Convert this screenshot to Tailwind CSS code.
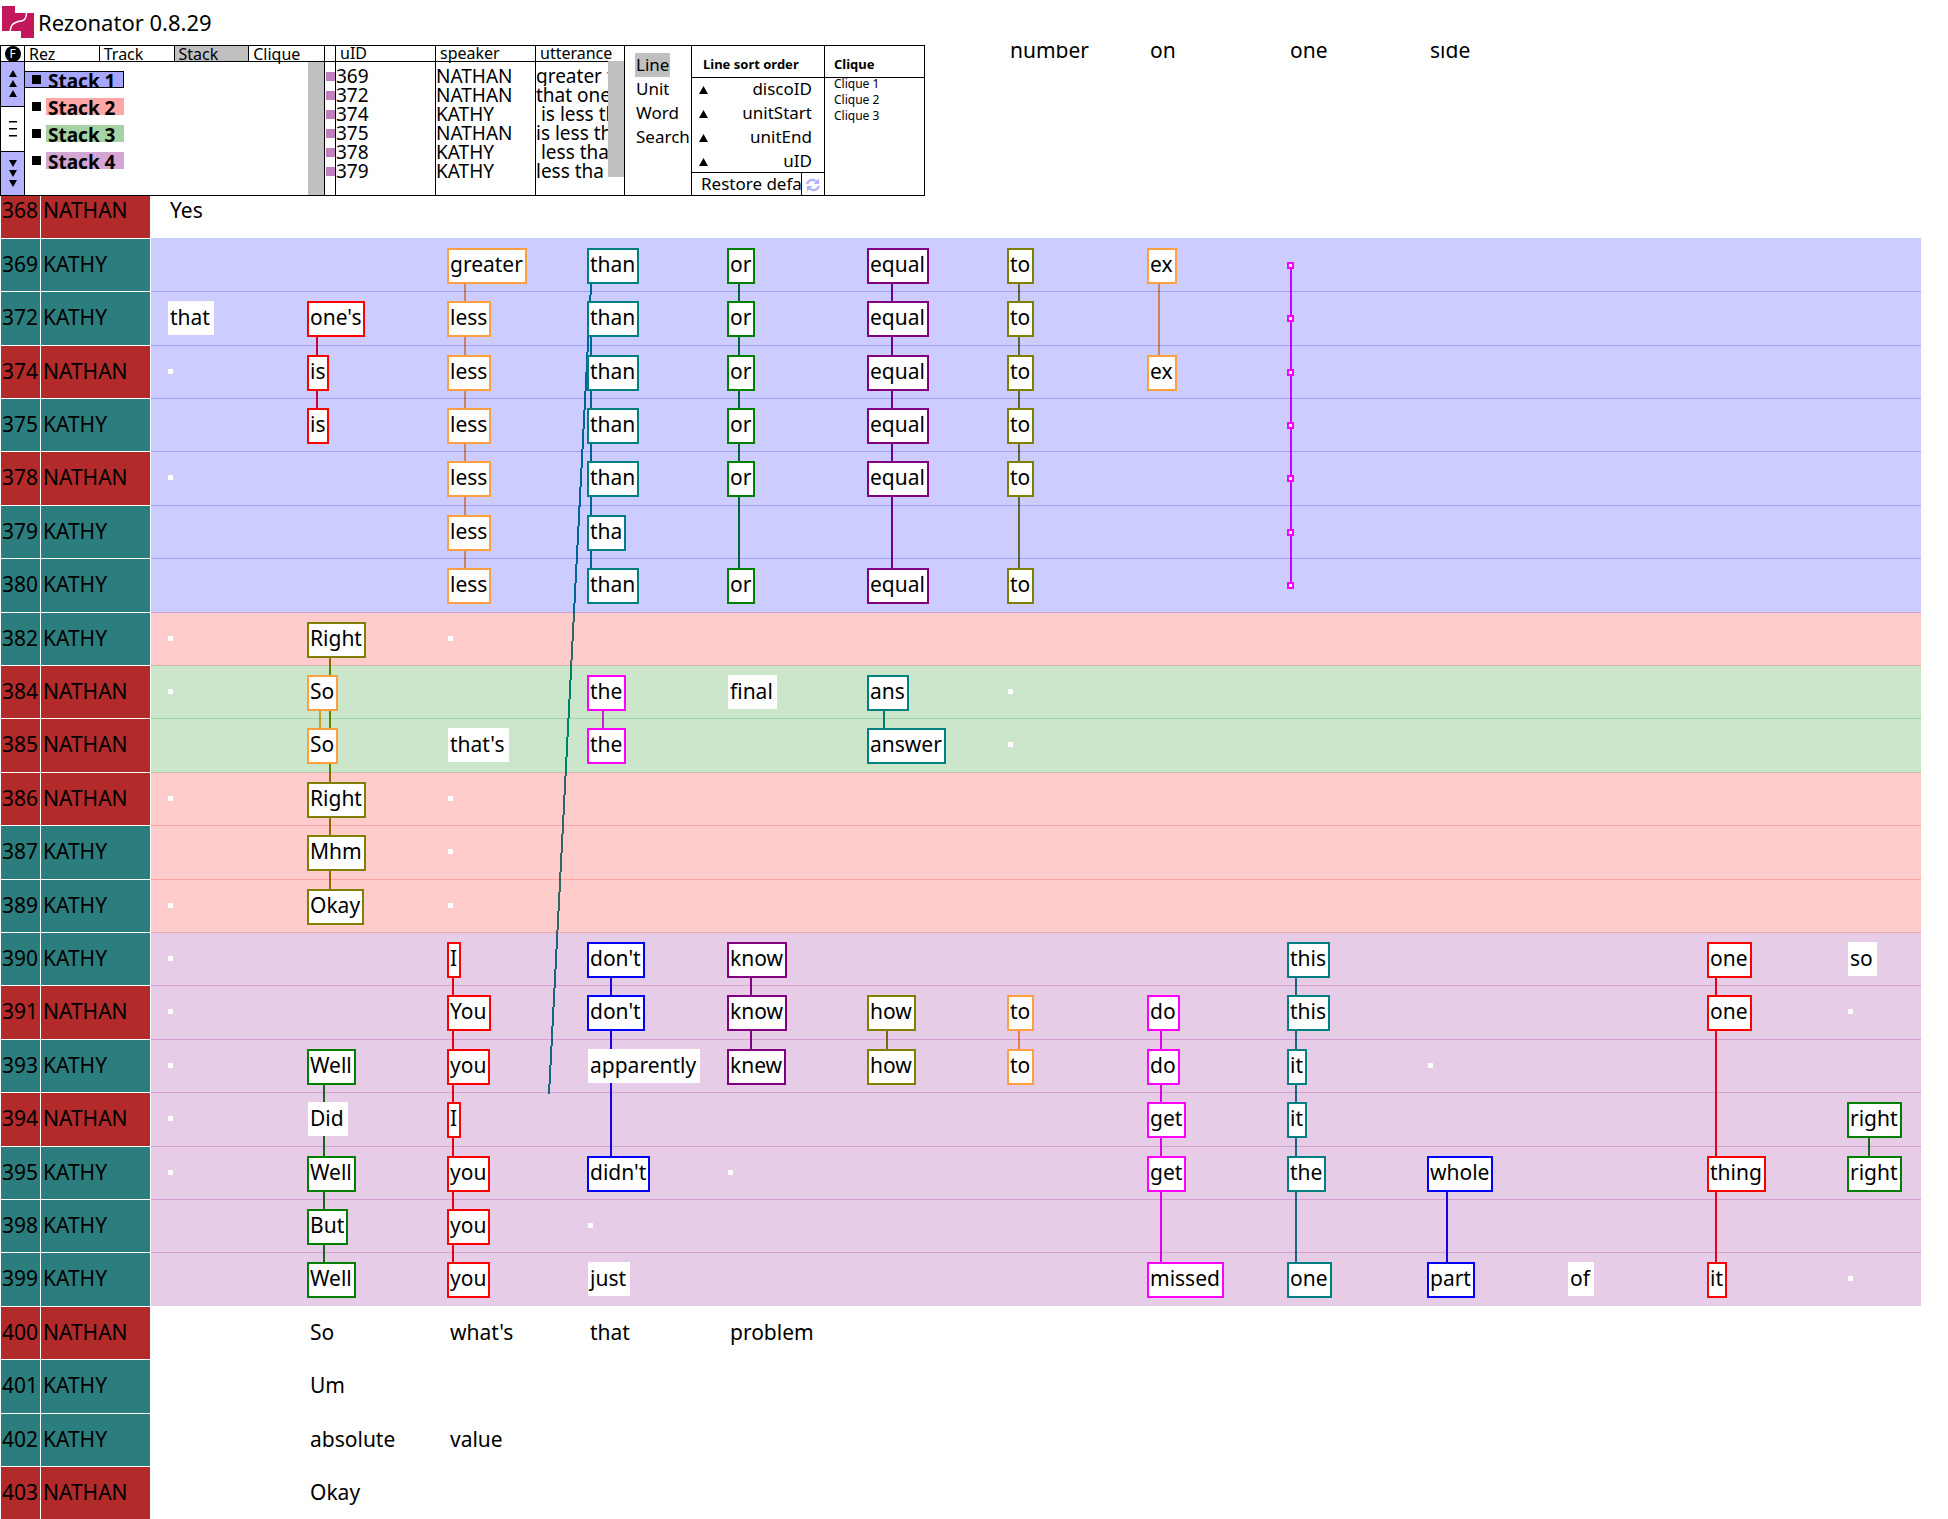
<!DOCTYPE html>
<html lang="en">
<head>
<meta charset="utf-8">
<title>Rezonator 0.8.29</title>
<script src="https://cdn.jsdelivr.net/npm/@tailwindcss/browser@4"></script>
</head>
<body class="bg-white text-black font-['Noto_Sans','Open_Sans',sans-serif] overflow-x-hidden">

<!-- Title bar -->
<header class="flex h-[45px] items-center gap-1 pb-px pl-0.5">
  <svg class="size-8" viewBox="0 0 32 32" aria-hidden="true">
    <path fill="#c2185b" d="M0 0H13V7H32V32H19V25H0Z"/>
    <path fill="none" stroke="#fff" stroke-width="1.500" d="M24.500 7C24 17 18 14.500 15 16C9 18 9.500 20 8 25"/>
  </svg>
  <h1 class="text-[22px] leading-8">Rezonator 0.8.29</h1>
</header>

<!-- Panels -->
<section class="flex h-[151px]">
  <div class="flex w-[925px] shrink-0 border-y border-r border-black">

    <!-- Scroll strip -->
    <nav class="flex w-[25px] shrink-0 flex-col border-x border-black" aria-label="Scroll">
      <button class="flex h-4 items-center justify-center border-b border-black">
        <span class="z-10 size-4 rounded-full bg-black text-[12px] leading-4 text-white">F</span>
      </button>
      <button class="flex h-[45px] items-center justify-center border-b border-black bg-[#b3b3ff]" aria-label="Up">
        <svg class="h-7 w-2" viewBox="0 0 8 28"><path d="M4 0 8 7H0ZM4 10 8 17H0ZM4 20 8 27H0Z"/></svg>
      </button>
      <button class="flex h-[45px] items-center justify-center border-b border-black" aria-label="Menu">
        <svg class="h-4 w-2" viewBox="0 0 8 16"><path d="M0 0H8V1.500H0ZM0 7H8V8.500H0ZM0 14H8V15.500H0Z"/></svg>
      </button>
      <button class="flex grow items-center justify-center bg-[#b3b3ff]" aria-label="Down">
        <svg class="h-7 w-2" viewBox="0 0 8 28"><path d="M0 0H8L4 7ZM0 10H8L4 17ZM0 20H8L4 27Z"/></svg>
      </button>
    </nav>

    <!-- Stack list -->
    <div class="flex w-[299px] shrink-0 flex-col">
      <div class="grid h-4 grid-cols-4 border-b border-black text-left text-base leading-[14px]">
        <button class="border-r border-black pl-1 text-left">Rez</button>
        <button class="border-r border-black pl-1 text-left">Track</button>
        <button class="border-r border-black bg-[#c0c0c0] pl-1 text-left">Stack</button>
        <button class="pl-1 text-left">Clique</button>
      </div>
      <div class="flex grow">
        <ul class="flex grow flex-col gap-2.5 pt-[9px] text-[19px] font-bold leading-5">
          <li class="flex h-[17px] w-[99px] items-center gap-[5px] overflow-hidden border border-l-0 border-black bg-[#a6a6ff] pl-[7px]"><span class="size-[9px] bg-black"></span><span class="h-[15px] pl-0.5 leading-[18px]">Stack 1</span></li>
          <li class="flex h-[17px] w-[99px] items-center gap-[5px] pl-[7px]"><span class="size-[9px] bg-black"></span><span class="h-[17px] grow overflow-hidden bg-[#ffa6a6] pl-0.5">Stack 2</span></li>
          <li class="flex h-[17px] w-[99px] items-center gap-[5px] pl-[7px]"><span class="size-[9px] bg-black"></span><span class="h-[17px] grow overflow-hidden bg-[#a6d3a6] pl-0.5">Stack 3</span></li>
          <li class="flex h-[17px] w-[99px] items-center gap-[5px] pl-[7px]"><span class="size-[9px] bg-black"></span><span class="h-[17px] grow overflow-hidden bg-[#d3a6d3] pl-0.5">Stack 4</span></li>
        </ul>
        <div class="w-4 bg-[#c0c0c0]"></div>
      </div>
    </div>

    <!-- Units of the selected stack -->
    <div class="relative w-[301px] shrink-0 border-x border-black">
      <table class="h-full w-full table-fixed border-separate border-spacing-0 whitespace-pre text-left text-[19px] leading-[19px]">
        <colgroup><col class="w-[11px]"><col class="w-[100px]"><col class="w-[100px]"><col></colgroup>
        <thead class="text-base leading-[15px]">
          <tr>
            <th class="h-4 border-b border-r border-black p-0"></th>
            <th class="h-4 border-b border-r border-black p-0 pl-1 font-normal">uID</th>
            <th class="h-4 border-b border-r border-black p-0 pl-1 font-normal">speaker</th>
            <th class="h-4 border-b border-black p-0 pl-1 font-normal">utterance</th>
          </tr>
        </thead>
        <tbody id="units"></tbody>
      </table>
      <div class="absolute right-0 top-[15px] h-[116px] w-4 bg-[#c0c0c0]"></div>
    </div>

    <!-- View -->
    <div class="flex w-[66px] shrink-0 flex-col items-start pl-[11px] pt-[7px] text-[17px] leading-6">
      <button class="-ml-px bg-[#c0c0c0] px-px">Line</button>
      <button>Unit</button>
      <button>Word</button>
      <button>Search</button>
    </div>

    <!-- Sort order -->
    <div class="flex w-[134px] shrink-0 flex-col border-x border-black">
      <h2 class="h-8 border-b border-black pl-[11px] pt-1 text-[13px] font-bold leading-7">Line sort order</h2>
      <ul class="grow text-[17px] leading-[22px]">
        <li class="flex h-6 items-start justify-between pl-[7px] pr-3"><svg class="mt-2 h-2 w-[9px]" viewBox="0 0 9 8"><path d="M4.500 0 9 8H0Z"/></svg>discoID</li>
        <li class="flex h-6 items-start justify-between pl-[7px] pr-3"><svg class="mt-2 h-2 w-[9px]" viewBox="0 0 9 8"><path d="M4.500 0 9 8H0Z"/></svg>unitStart</li>
        <li class="flex h-6 items-start justify-between pl-[7px] pr-3"><svg class="mt-2 h-2 w-[9px]" viewBox="0 0 9 8"><path d="M4.500 0 9 8H0Z"/></svg>unitEnd</li>
        <li class="flex h-[22px] items-start justify-between pl-[7px] pr-3"><svg class="mt-2 h-2 w-[9px]" viewBox="0 0 9 8"><path d="M4.500 0 9 8H0Z"/></svg>uID</li>
      </ul>
      <div class="flex h-6 shrink-0 border-t border-black">
        <button class="w-[110px] overflow-hidden whitespace-nowrap border-r border-black pb-0.5 pl-[9px] text-left text-[17px] leading-5">Restore default</button>
        <button class="flex grow items-center justify-center" aria-label="Refresh">
          <svg class="size-[14px]" viewBox="0 0 14 14" fill="#b3b3ff"><path d="M0 6C1 1 7-1 11 2.500L13 .5V6H7.500L9.500 4C7 2 3.500 3 2.500 6ZM14 8C13 13 7 15 3 11.500L1 13.500V8H6.500L4.500 10C7 12 10.500 11 11.500 8Z"/></svg>
        </button>
      </div>
    </div>

    <!-- Cliques -->
    <div class="grow">
      <h2 class="h-8 border-b border-black pl-[9px] pt-1 text-[13px] font-bold leading-7">Clique</h2>
      <ul class="-mt-0.5 pl-[9px] text-[12px] leading-4">
        <li>Clique 1</li>
        <li>Clique 2</li>
        <li>Clique 3</li>
      </ul>
    </div>
  </div>

  <!-- Line scrolled partly out of view -->
  <div class="h-8 grow overflow-hidden pl-[85px]">
    <div class="-mt-[11px] grid grid-cols-[140px_140px_140px_140px] pt-0.5 text-[21px] leading-[28px]">
      <span>number</span><span>on</span><span>one</span><span>side</span>
    </div>
  </div>
</section>

<!-- Transcript -->
<main class="relative pr-[27px]">
  <svg id="links" class="absolute inset-0 h-full w-full" fill="none" stroke-width="2" shape-rendering="crispEdges" aria-hidden="true"></svg>
  <table class="relative w-full table-fixed border-separate border-spacing-0 text-left text-[21px] leading-[28px]">
    <colgroup id="cols"><col class="w-[41px]"><col class="w-[110px]"></colgroup>
    <tbody id="lines"></tbody>
  </table>
</main>

<script>
const units = [
  ['369', 'NATHAN', 'greater than'], ['372', 'NATHAN', "that one's"], ['374', 'KATHY', ' is less than'],
  ['375', 'NATHAN', 'is less than'], ['378', 'KATHY', ' less than'], ['379', 'KATHY', 'less tha'],
];
const body = document.getElementById('units');
body.innerHTML = units.map(([id, who, text]) => `<tr>
  <td class="h-[19px] border-r border-black p-0"><div class="ml-px size-[9px] bg-[#c080c0]"></div></td>
  <td class="h-[19px] border-r border-black p-0">${id}</td>
  <td class="h-[19px] border-r border-black p-0">${who}</td>
  <td class="h-[19px] overflow-hidden p-0">${text}</td></tr>`).join('');
// spacer rows let the column rules run the full height of the panel
const spacer = h => `<tr><td class="${h} border-r border-black p-0"></td><td class="${h} border-r border-black p-0"></td><td class="${h} border-r border-black p-0"></td><td class="${h} p-0"></td></tr>`;
body.insertAdjacentHTML('afterbegin', spacer('h-[5px]'));
body.insertAdjacentHTML('beforeend', spacer('h-[14px]'));

// [uID, speaker, stack, one entry per column]; an entry is "chain:word", "." for a pause
const lines = [
  ['368', 'NATHAN', 0, '-:Yes'],
  ['369', 'KATHY', 1, '||o:greater|t:than|g:or|p:equal|l:to|o:ex|#'],
  ['372', 'KATHY', 1, "w:that|r:one's|o:less|t:than|g:or|p:equal|l:to||#"],
  ['374', 'NATHAN', 1, '.|r:is|o:less|t:than|g:or|p:equal|l:to|o:ex|#'],
  ['375', 'KATHY', 1, '|r:is|o:less|t:than|g:or|p:equal|l:to||#'],
  ['378', 'NATHAN', 1, '.||o:less|t:than|g:or|p:equal|l:to||#'],
  ['379', 'KATHY', 1, '||o:less|t:tha|||||#'],
  ['380', 'KATHY', 1, '||o:less|t:than|g:or|p:equal|l:to||#'],
  ['382', 'KATHY', 2, '.|l:Right|.'],
  ['384', 'NATHAN', 3, '.|o:So||m:the|w:final|t:ans|.'],
  ['385', 'NATHAN', 3, "|o:So|w:that's|m:the||t:answer|."],
  ['386', 'NATHAN', 2, '.|l:Right|.'],
  ['387', 'KATHY', 2, '|l:Mhm|.'],
  ['389', 'KATHY', 2, '.|l:Okay|.'],
  ['390', 'KATHY', 4, ".||r:I|b:don't|p:know||||t:this|||r:one|w:so"],
  ['391', 'NATHAN', 4, ".||r:You|b:don't|p:know|l:how|o:to|m:do|t:this|||r:one|."],
  ['393', 'KATHY', 4, '.|g:Well|r:you|w:apparently|p:knew|l:how|o:to|m:do|t:it|.'],
  ['394', 'NATHAN', 4, '.|w:Did|r:I|||||m:get|t:it||||g:right'],
  ['395', 'KATHY', 4, ".|g:Well|r:you|b:didn't|.|||m:get|t:the|b:whole||r:thing|g:right"],
  ['398', 'KATHY', 4, '|g:But|r:you|.'],
  ['399', 'KATHY', 4, '|g:Well|r:you|w:just||||m:missed|t:one|b:part|w:of|r:it|.'],
  ['400', 'NATHAN', 0, "|-:So|-:what's|-:that|-:problem"],
  ['401', 'KATHY', 0, '|-:Um'],
  ['402', 'KATHY', 0, '|-:absolute|-:value'],
  ['403', 'NATHAN', 0, '|-:Okay'],
];
const stackBg = ['', 'bg-[#0000ff]/20', 'bg-[#ff0000]/20', 'bg-[#008000]/20', 'bg-[#800080]/20'];
const stackRule = ['border-transparent', 'border-[#0000ff]/20', 'border-[#ff0000]/20', 'border-[#008000]/20', 'border-[#800080]/20'];
const chipBorder = {
  o: 'border-[#ffa040]', t: 'border-[#008080]', g: 'border-[#008000]', p: 'border-[#800080]',
  l: 'border-[#808000]', r: 'border-[#ff0000]', b: 'border-[#0000ff]', m: 'border-[#ff00ff]',
};
const heights = [53, 54, 53, 53, 54];
const rowClass = { 53: 'h-[53px]', 54: 'h-[54px]' };
const speakerBg = { NATHAN: 'bg-[#b22a2a]', KATHY: 'bg-[#2c7d7d]' };

function cell(entry) {
  if (!entry) return '';
  if (entry === '.') return '<div class="ml-px mt-[14px] size-[5px] bg-white"></div>';
  if (entry === '#') return '<div class="mt-[14px] size-[7px] border-2 border-[#ff00ff] bg-white"></div>';
  const [kind, word] = entry.split(':');
  if (kind === '-') return `<span class="ml-[3px]">${word}</span>`;
  if (kind === 'w') return `<div class="ml-px h-[34px] w-fit bg-white pl-0.5 pr-1 pt-0.5">${word}</div>`;
  return `<div class="h-9 w-fit border-2 bg-white pl-px pr-0.5 ${chipBorder[kind]}">${word}</div>`;
}

const mid = {};
let offset = 0, prev = 0, html = '';
lines.forEach(([id, who, stack, text], i) => {
  const first = i === 0;
  const h = first ? 42 : heights[(i - 1) % 5];
  const hc = first ? 'h-[42px]' : rowClass[h];
  const pad = first ? 'pt-0' : 'pt-[11px]';
  const wordPad = first || !stack ? pad : 'pt-[9px]';
  const topRule = first ? '' : 'border-t';
  const words = text.split('|');
  html += `<tr><th scope="row" class="${hc} ${pad} ${topRule} border-x border-white pb-0 pl-px pr-0 align-top font-normal ${speakerBg[who]}">${id}</th>`
    + `<td class="${hc} ${pad} ${topRule} border-r border-white pb-0 pl-0.5 pr-0 align-top ${speakerBg[who]}">${who}</td>`;
  for (let c = 0; c < 13; c++)
    html += `<td class="${hc} ${wordPad} ${topRule} ${stack ? stackRule[prev] : stackRule[0]} whitespace-nowrap pb-0 pl-4 pr-0 align-top ${stackBg[stack]}">${cell(words[c])}</td>`;
  html += '</tr>';
  mid[id] = offset + 28;
  offset += h;
  prev = stack;
});
document.getElementById('lines').innerHTML = html;
document.getElementById('cols').insertAdjacentHTML('beforeend', '<col class="w-[140px]">'.repeat(12) + '<col>');

// chain links: [colour, x, first line, last line]
const links = [
  ['#ff0000', 317, 372, 375], ['#ffa040', 465, 369, 380], ['#008080', 591, 372, 380], ['#008000', 739, 369, 380],
  ['#800080', 892, 369, 380], ['#808000', 1019, 369, 380], ['#ffa040', 1159, 369, 374], ['#ff00ff', 1291, 369, 380],
  ['#808000', 330, 382, 389], ['#ffa040', 320, 384, 385], ['#ff00ff', 603, 384, 385], ['#008080', 884, 384, 385],
  ['#008000', 324, 393, 399], ['#ff0000', 453, 390, 399], ['#0000ff', 611, 390, 395], ['#800080', 751, 390, 393],
  ['#808000', 887, 391, 393], ['#ffa040', 1019, 391, 393], ['#ff00ff', 1161, 391, 399], ['#008080', 1296, 390, 399],
  ['#0000ff', 1447, 395, 399], ['#ff0000', 1716, 390, 399], ['#008000', 1869, 394, 395],
];
document.getElementById('links').innerHTML =
  links.map(([c, x, a, b]) => `<path stroke="${c}" d="M${x} ${mid[a]}V${mid[b]}"/>`).join('')
  + `<path stroke="#008080" d="M592 ${mid[369]}L549 ${mid[394] - 26}"/>`;
</script>
</body>
</html>
